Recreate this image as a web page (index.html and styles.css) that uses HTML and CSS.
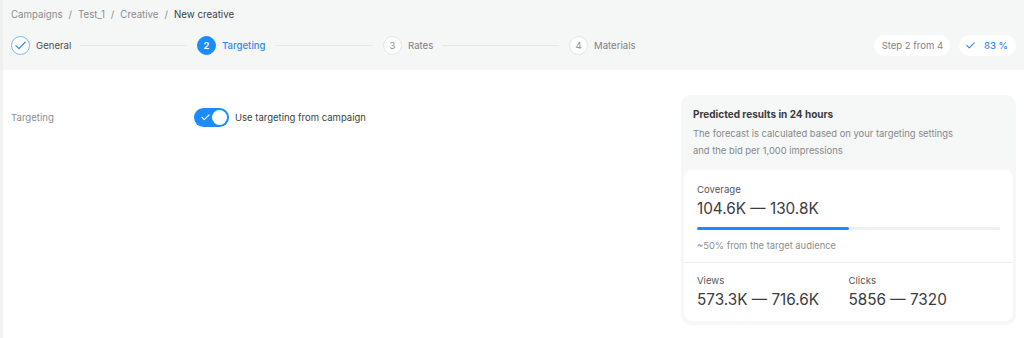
FILE: index.html
```html
<!DOCTYPE html>
<html>
<head>
<meta charset="utf-8">
<link rel="stylesheet" href="styles.css">
</head>
<body>
<header class="header">
  <nav class="crumbs">
    <span>Campaigns</span><span class="sep">/</span><span>Test_1</span><span class="sep">/</span><span>Creative</span><span class="sep">/</span><span class="cur">New creative</span>
  </nav>
  <div class="steps-row">
    <div class="steps">
      <div class="step done">
        <span class="circle"><svg width="11" height="9" viewBox="0 0 11 9"><path d="M1 4.6 L4 7.6 L10 1.2" fill="none" stroke="#2f8cf0" stroke-width="1.3" stroke-linecap="round" stroke-linejoin="round"/></svg></span>
        <span class="label">General</span><span class="line"></span>
      </div>
      <div class="step active">
        <span class="circle">2</span>
        <span class="label">Targeting</span><span class="line"></span>
      </div>
      <div class="step">
        <span class="circle">3</span>
        <span class="label">Rates</span><span class="line"></span>
      </div>
      <div class="step">
        <span class="circle">4</span>
        <span class="label">Materials</span>
      </div>
    </div>
    <div class="pills">
      <span class="pill">Step 2 from 4</span>
      <span class="pill blue"><svg width="9" height="7" viewBox="0 0 9 7"><path d="M0.8 3.4 L3.2 5.9 L8.2 0.9" fill="none" stroke="#2f8cf0" stroke-width="1.1" stroke-linecap="round" stroke-linejoin="round"/></svg>83 %</span>
    </div>
  </div>
</header>
<main class="main">
  <section class="form">
    <div class="form-row">
      <span class="form-label">Targeting</span>
      <span class="toggle"><svg class="tcheck" width="9" height="7" viewBox="0 0 9 7"><path d="M1 3.4 L3.3 5.7 L8 1" fill="none" stroke="#fff" stroke-width="1.1" stroke-linecap="round" stroke-linejoin="round"/></svg><span class="knob"></span></span>
      <span class="toggle-text">Use targeting from campaign</span>
    </div>
  </section>
  <aside class="card">
    <h3 class="card-title">Predicted results in 24 hours</h3>
    <p class="card-desc">The forecast is calculated based on your targeting settings<br>and the bid per 1,000 impressions</p>
    <div class="inner">
      <div class="coverage">
        <div class="m-label">Coverage</div>
        <div class="m-value">104.6K — 130.8K</div>
        <div class="bar"><div class="fill" style="width:50%"></div></div>
        <div class="m-sub">~50% from the target audience</div>
      </div>
      <div class="metrics">
        <div class="metric">
          <div class="m-label">Views</div>
          <div class="m-value">573.3K — 716.6K</div>
        </div>
        <div class="metric">
          <div class="m-label">Clicks</div>
          <div class="m-value">5856 — 7320</div>
        </div>
      </div>
    </div>
  </aside>
</main>
</body>
</html>
```

FILE: styles.css
```css
* { box-sizing: border-box; }
html, body { margin: 0; padding: 0; }
body {
  font-family: Inter, "Noto Sans", sans-serif;
  background: #ffffff;
  color: #333;
  width: 1024px;
  height: 338px;
  overflow: hidden;
  box-shadow: inset 3px 0 0 #f2f3f3;
}
.header {
  background: #f5f6f6;
  height: 70px;
  padding: 8px 8px 0 11px;
  box-shadow: inset 3px 0 0 #eeefef;
}
.crumbs {
  font-size: 9.7px;
  line-height: 14px;
  color: #8a8d90;
  display: flex;
}
.crumbs .sep { margin: 0 6px; }
.crumbs .cur { color: #3d3f42; }
.steps-row {
  display: flex;
  align-items: center;
  justify-content: space-between;
  margin-top: 12px;
  height: 22px;
}
.steps {
  display: grid;
  grid-template-columns: 186px 186px 186px 186px;
}
.step {
  display: flex;
  align-items: center;
  font-size: 9.6px;
  color: #55585b;
}
.circle {
  width: 19px;
  height: 19px;
  border-radius: 50%;
  border: 1px solid #e3e5e6;
  background: #fff;
  display: flex;
  align-items: center;
  justify-content: center;
  font-size: 9.5px;
  color: #8a8d90;
  flex: none;
}
.step.done .circle { border-color: #7db8f5; }
.step.active .circle {
  background: #1a8cff;
  border-color: #1a8cff;
  color: #fff;
  font-weight: 600;
}
.step.active .label { color: #2f8cf0; font-weight: 500; }
.step .label { margin-left: 6px; }
.step.done .label { color: #4a4d50; }
.step:not(.done):not(.active) .label { color: #7f8286; }
.line {
  flex: 1;
  height: 1px;
  background: #e6e8e9;
  margin: 0 10px 0 9px;
}
.pills { display: flex; gap: 9px; }
.pill {
  height: 21px;
  border-radius: 11px;
  background: #fff;
  padding: 0 7px 0 8px;
  display: flex;
  align-items: center;
  font-size: 9.5px;
  color: #7f8286;
}
.pill.blue { color: #2f8cf0; font-weight: 500; gap: 9px; padding: 0 8px 0 7px; }
.main {
  display: flex;
  justify-content: space-between;
  align-items: flex-start;
  padding: 0 8px 0 11px;
}
.form { padding-top: 38px; }
.form-row {
  display: flex;
  align-items: center;
  height: 19px;
}
.form-label {
  width: 183px;
  font-size: 9.6px;
  color: #8a8d90;
}
.toggle {
  position: relative;
  width: 35px;
  height: 19px;
  border-radius: 10px;
  background: #1a8cff;
  display: flex;
  align-items: center;
  padding-left: 7px;
}
.knob {
  position: absolute;
  right: 2px;
  top: 2px;
  width: 15px;
  height: 15px;
  border-radius: 50%;
  background: #fff;
}
.toggle-text {
  margin-left: 6px;
  font-size: 9.5px;
  color: #3d3f42;
}
.card {
  margin-top: 25px;
  width: 335px;
  background: #f6f7f7;
  border-radius: 10px;
  padding: 12px 3px 4px 3px;
}
.card-title {
  margin: 0 9px;
  font-size: 10px;
  line-height: 14px;
  font-weight: 700;
  color: #3a3c3f;
}
.card-desc {
  margin: 4px 9px 0;
  font-size: 9.4px;
  line-height: 17px;
  color: #85888c;
}
.inner {
  margin-top: 11px;
  background: #fff;
  border-radius: 8px;
}
.coverage {
  padding: 13px 13px 10px;
  border-bottom: 1px solid #eceeef;
}
.m-label {
  font-size: 9.6px;
  line-height: 14px;
  color: #55585b;
}
.m-value {
  margin-top: 2px;
  font-size: 15.3px;
  line-height: 20px;
  color: #3a3c3f;
}
.bar {
  margin-top: 8px;
  height: 3px;
  background: #eef0f1;
  border-radius: 2px;
}
.fill {
  height: 3px;
  background: #1a8cff;
  border-radius: 2px;
}
.m-sub {
  margin-top: 9px;
  font-size: 9.4px;
  line-height: 13px;
  color: #8a8d90;
}
.metrics {
  display: flex;
  padding: 11px 13px 11px;
}
.metric { width: 158px; }
```
